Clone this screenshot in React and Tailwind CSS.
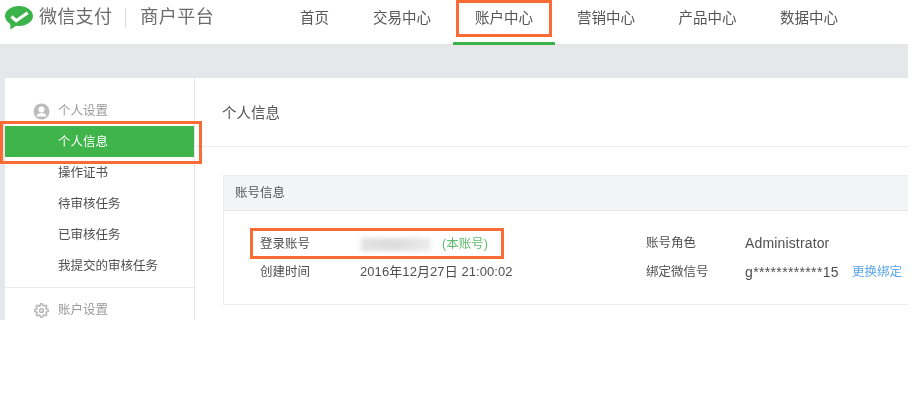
import React from 'react';

const FONT = "font-['Liberation_Sans','Noto_Sans_CJK_SC',sans-serif]";

const navItems = [
  { label: '首页', width: 'w-[55px] mr-[9px]' },
  { label: '交易中心', width: 'w-[102px]' },
  { label: '账户中心', width: 'w-[102px]', active: true },
  { label: '营销中心', width: 'w-[102px]' },
  { label: '产品中心', width: 'w-[101px]' },
  { label: '数据中心', width: 'w-[102px]' },
];
const taskItems = ['操作证书', '待审核任务', '已审核任务', '我提交的审核任务'];

const WechatPayLogo = () => (
  <svg width="28" height="24" viewBox="0 0 28 24">
    <path d="M14 0C6.300 0 0 4.500 0 10c0 3.200 2 6 5.200 7.900L5.500 23.500l5.700-3.700c.9.100 1.800.2 2.800.2 7.700 0 14-4.500 14-10S21.700 0 14 0z" fill="#3cb34a" />
    <path d="M6.500 10.500l4.700 4.300 11.500-8" fill="none" stroke="#ffffff" strokeWidth="3.200" />
  </svg>
);

const UserIcon = () => (
  <svg width="17" height="17" viewBox="0 0 17 17">
    <circle cx="8.500" cy="8.500" r="8" fill="#bdbdbd" />
    <circle cx="8.500" cy="6.500" r="3" fill="#ffffff" />
    <path d="M3.500 13.500c.4-2.600 2.400-3.600 5-3.600s4.600 1 5 3.600z" fill="#ffffff" />
  </svg>
);

const GearIcon = () => (
  <svg width="15" height="15" viewBox="0 0 24 24" fill="none" stroke="#b5b5b5" strokeWidth="2.400">
    <circle cx="12" cy="12" r="3" />
    <path d="M19.400 15a1.650 1.650 0 0 0 .33 1.820l.06.06a2 2 0 1 1-2.830 2.830l-.06-.06a1.650 1.650 0 0 0-2.820 1.170V21a2 2 0 1 1-4 0v-.09a1.650 1.650 0 0 0-2.820-1.170l-.06.06a2 2 0 1 1-2.830-2.830l.06-.06A1.650 1.650 0 0 0 3.090 14H3a2 2 0 1 1 0-4h.09a1.650 1.650 0 0 0 1.170-2.820l-.06-.06a2 2 0 1 1 2.830-2.830l.06.06A1.650 1.650 0 0 0 10 3.090V3a2 2 0 1 1 4 0v.09a1.650 1.650 0 0 0 2.820 1.170l.06-.06a2 2 0 1 1 2.830 2.830l-.06.06A1.650 1.650 0 0 0 20.910 10H21a2 2 0 1 1 0 4h-.09a1.650 1.650 0 0 0-1.510 1z" />
  </svg>
);

const Header = () => (
  <header className="h-[45px] flex bg-white border-b border-[#e3e3e6]">
    <div className="w-[287px] flex items-center pl-[5px] pb-[9px]">
      <WechatPayLogo />
      <span className="ml-[6px] text-[18px] text-[#6b6b6b] tracking-[0.3px]">微信支付</span>
      <span className="ml-[13px] mr-[14px] w-px h-[20px] bg-[#dddddd]" />
      <span className="text-[18px] text-[#6b6b6b] tracking-[0.5px]">商户平台</span>
    </div>
    <nav className="flex">
      {navItems.map((item) => (
        <div
          key={item.label}
          className={`relative h-[45px] flex justify-center pt-[8px] text-[14.5px] text-[#555555] ${item.width} ${
            item.active ? 'border-b-[3px] border-[#3cb34a]' : ''
          }`}
        >
          {item.label}
          {item.active && (
            <span className="absolute left-[3px] top-0 w-[96px] h-[37px] border-[3px] border-[#fa6b35]" />
          )}
        </div>
      ))}
    </nav>
  </header>
);

const Sidebar = () => (
  <aside className="w-[190px] shrink-0 bg-white border-r border-[#e6e6e8] pt-[25px] text-[12.5px] text-[#4f4f4f]">
    <div className="h-[17px] flex items-center pl-[28px] gap-[8px] text-[#999999]">
      <UserIcon />
      <span>个人设置</span>
    </div>
    <div className="relative mt-[6px] h-[31px] bg-[#3eb44a] text-white flex items-center pl-[53px] pt-[1px]">
      个人信息
      <span className="absolute left-[-5px] top-[-5px] w-[202px] h-[43px] border-[3px] border-[#fa6b35]" />
    </div>
    <div>
      {taskItems.map((item) => (
        <div key={item} className="h-[31px] flex items-center pl-[53px] pt-[2px]">
          {item}
        </div>
      ))}
    </div>
    <div className="mt-[6px] border-t border-[#e8e8e8] pt-[13px] flex items-center pl-[29px] gap-[9px] text-[#999999]">
      <GearIcon />
      <span>账户设置</span>
    </div>
  </aside>
);

const InfoRows = () => (
  <div className="grid grid-cols-[422px_1fr] pt-[17px] text-[12.5px] text-[#4f4f4f]">
    <div className="relative h-[31px] flex items-center pl-[36px] pt-[2px]">
      <span className="w-[101px]">登录账号</span>
      <span className="w-[70px] h-[13px] mr-[11px] bg-linear-to-r from-[#e2e2e2] via-[#dddddd] to-[#ececec] blur-[2px]" />
      <span className="text-[#5fbb6c]">(本账号)</span>
      <span className="absolute left-[26px] top-0 w-[254px] h-[31px] border-[3px] border-[#fa6b35]" />
    </div>
    <div className="h-[31px] flex items-center">
      <span className="w-[99px]">账号角色</span>
      <span className="text-[14px] tracking-[0.15px]">Administrator</span>
    </div>
    <div className="h-[26px] flex items-center pl-[36px]">
      <span className="w-[100px]">创建时间</span>
      <span className="text-[13px] tracking-[0.08px]">2016年12月27日 21:00:02</span>
    </div>
    <div className="h-[26px] flex items-center">
      <span className="w-[99px]">绑定微信号</span>
      <span className="text-[14px] tracking-[0.35px]">g************15</span>
      <span className="ml-[13px] text-[#5aa5ea]">更换绑定</span>
    </div>
  </div>
);

const Main = () => (
  <main className="flex-1 bg-white">
    <div className="h-[69px] border-b border-[#ececee] pl-[27px] pt-[25px] text-[14.5px] leading-[20px] text-[#555555]">
      个人信息
    </div>
    <section className="mt-[28px] ml-[28px] h-[130px] border border-[#ececee] border-r-0">
      <div className="h-[35px] bg-[#f3f4f7] border-b border-[#e6e6e8] flex items-center pl-[11px] text-[12.5px] text-[#555555]">
        账号信息
      </div>
      <InfoRows />
    </section>
  </main>
);

export default function App() {
  return (
    <div className={`${FONT} w-[916px] h-[418px] bg-white`}>
      <div className="w-[908px] h-[320px] overflow-hidden flex flex-col bg-[#e6e7eb] blur-[0.35px]">
        <Header />
        <div className="flex flex-1 mt-[33px] ml-[5px] min-h-0">
          <Sidebar />
          <Main />
        </div>
      </div>
    </div>
  );
}
